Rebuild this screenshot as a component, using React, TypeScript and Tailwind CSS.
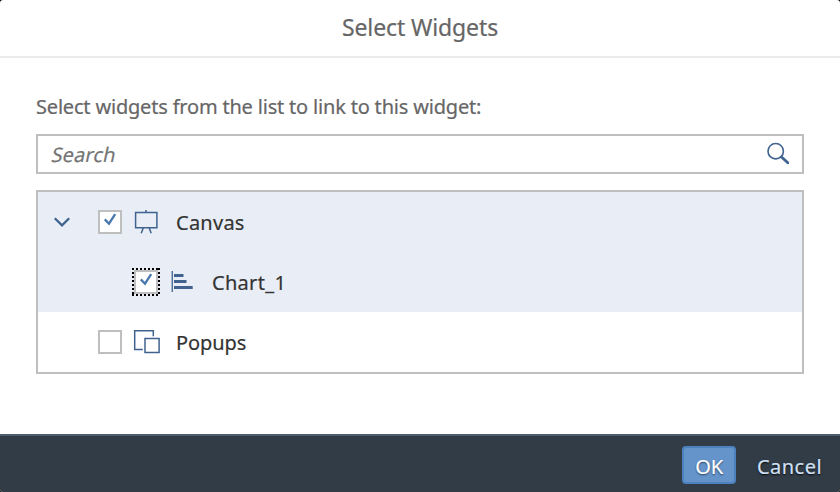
import type { ReactNode } from "react";

function Check({ checked = false, focused = false }: { checked?: boolean; focused?: boolean }) {
  return (
    <span className="relative flex size-6 shrink-0 border-2 border-[#bfbfbf] bg-white">
      {focused && (
        <svg className="absolute -left-1 -top-1 size-7" viewBox="0 0 28 28" fill="none" stroke="#000" strokeWidth="2" strokeDasharray="2 2">
          <path d="M0 1H28M0 27H28M1 0V28M27 0V28" />
        </svg>
      )}
      {checked && (
        <svg className="size-5" viewBox="0 0 20 20" fill="none" stroke="#4878ae" strokeWidth="2.3">
          <path d="M4.8 7.4L9 11.7L15.2 2.2" />
        </svg>
      )}
    </span>
  );
}

function CanvasIcon() {
  return (
    <svg className="size-7" viewBox="0 0 28 28" fill="none" stroke="#3f628f" strokeWidth="1.5">
      <path d="M3.6 4.6H24.9V19.7H3.6ZM14 2V4.5M11.3 20L9.2 25.2M17.2 20L19.2 25.2" />
    </svg>
  );
}

function ChartIcon() {
  return (
    <svg className="size-7" viewBox="0 0 28 28" fill="#3f628f">
      <path d="M3.6 3H4.9V24H3.6ZM6 6H15.5V9H6ZM6 12H18.5V15H6ZM6 18H24.7V21H6Z" />
    </svg>
  );
}

function PopupsIcon() {
  return (
    <svg className="size-7" viewBox="0 0 28 28" fill="none" stroke="#3f628f" strokeWidth="1.5">
      <path d="M10.8 21.5H2.7V2.7H21.3V8.2M13 10.6H27.1V24.5H13Z" />
    </svg>
  );
}

function Row({ children, className = "" }: { children: ReactNode; className?: string }) {
  return <div className={`flex h-[60px] items-center ${className}`}>{children}</div>;
}

export default function App() {
  return (
    <div className="bg-black">
      <div className="flex h-[492px] w-[840px] flex-col overflow-hidden rounded-[3px] bg-white font-['Noto_Sans',sans-serif] text-[20px] text-[#666] [-webkit-text-stroke:0.2px]">
        <header className="flex h-[58px] shrink-0 items-center justify-center border-b-2 border-[#ebebeb] text-[23px]">
          <h1 className="-mt-0.5 whitespace-nowrap tracking-[-0.12px]">Select Widgets</h1>
        </header>
        <main className="flex flex-1 flex-col px-9 pt-[34px]">
          <p className="h-[30px] whitespace-nowrap leading-[30px] tracking-[-0.19px]">Select widgets from the list to link to this widget:</p>
          <div className="mt-3 flex h-10 items-center justify-between border-2 border-[#bfbfbf] pl-[14px] pr-3">
            <span className="-skew-x-[12deg] pt-px tracking-[0.15px] text-[#757575]">Search</span>
            <svg className="size-6" viewBox="0 0 24 24" fill="none" stroke="#3f628f">
              <circle cx="9.7" cy="9.2" r="7.7" strokeWidth="1.6" />
              <path d="M15.5 15L21.8 20.8" strokeWidth="2.8" strokeLinecap="round" />
            </svg>
          </div>
          <div className="mt-4 h-[184px] border-2 border-[#bfbfbf] text-[#333]">
            <Row className="bg-[#e9eef6] pl-4">
              <svg className="mr-7 h-4 w-4" viewBox="0 0 16 16" fill="none" stroke="#3f628f" strokeWidth="2.3">
                <path d="M.8 4.2L8 11.3L15.2 4.2" />
              </svg>
              <Check checked />
              <span className="ml-2.5 mr-4"><CanvasIcon /></span>
              <span className="pt-0.5 tracking-[0.25px]">Canvas</span>
            </Row>
            <Row className="bg-[#e9eef6] pl-24">
              <Check checked focused />
              <span className="ml-2.5 mr-4"><ChartIcon /></span>
              <span className="pt-0.5 tracking-[0.3px]">Chart_1</span>
            </Row>
            <Row className="pl-[60px]">
              <Check />
              <span className="ml-2.5 mr-4"><PopupsIcon /></span>
              <span className="pt-0.5 tracking-[-0.1px]">Popups</span>
            </Row>
          </div>
        </main>
        <footer className="flex h-[58px] shrink-0 items-center justify-end border-t-2 border-[#4c5c6c] bg-[#323c47] pr-[18px] pt-0.5">
          <button className="mr-[21px] h-[38px] w-[54px] rounded-[4px] border-2 border-[#4d82be] bg-[#6594cb] pt-1 leading-[30px] tracking-[-0.1px] text-white [text-shadow:0_1px_2px_#0009]">OK</button>
          <button className="pt-1 tracking-[0.45px] text-[#d1e0f5] [text-shadow:0_1px_2px_#000]">Cancel</button>
        </footer>
      </div>
    </div>
  );
}
